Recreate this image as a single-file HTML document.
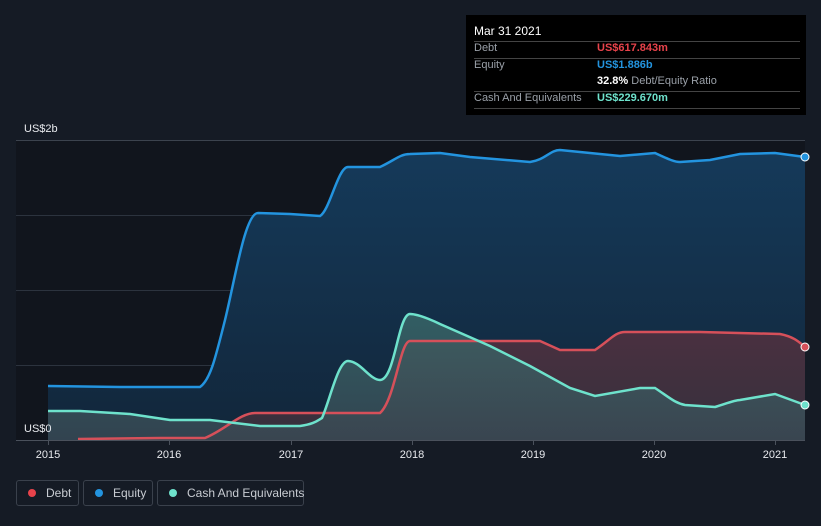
<!DOCTYPE html>
<html><head><style>
html,body{margin:0;width:821px;height:526px;overflow:hidden}
body{background:#151b25;font-family:"Liberation Sans",sans-serif;position:relative}
.tt{position:absolute;left:466px;top:15px;width:340px;height:100px;background:#000;color:#fff;font-size:11px}
.tt .r{position:absolute;left:8px;right:6px;border-top:1px solid #444}
.lab{color:#9aa0a8}
.leg{position:absolute;top:480px;height:26px;border:1px solid #3a414c;border-radius:3px;color:#c8ccd2;font-size:12px;line-height:24px;box-sizing:border-box;white-space:nowrap}
.dot{display:inline-block;width:8px;height:8px;border-radius:50%;margin:0 10px 0 11px;vertical-align:0px}
</style></head><body>
<svg width="821" height="526" style="position:absolute;left:0;top:0">
<defs>
<linearGradient id="ge" x1="0" y1="0" x2="0" y2="1"><stop offset="0" stop-color="#153a5a"/><stop offset="1" stop-color="#12263a"/></linearGradient>
<linearGradient id="gd" x1="0" y1="0" x2="0" y2="1"><stop offset="0" stop-color="#4a3040"/><stop offset="1" stop-color="#35303c"/></linearGradient>
<linearGradient id="gc" x1="0" y1="0" x2="0" y2="1"><stop offset="0" stop-color="#3a6a6a" stop-opacity=".8"/><stop offset="1" stop-color="#3a4a55" stop-opacity=".8"/></linearGradient>
</defs>
<rect x="16" y="140" width="789" height="300" fill="#11151d"/>
<g stroke="#2c333e" stroke-width="1"><line x1="16" y1="140.5" x2="805" y2="140.5" stroke="#3c434e"/><line x1="16" y1="215.5" x2="805" y2="215.5"/><line x1="16" y1="290.5" x2="805" y2="290.5"/><line x1="16" y1="365.5" x2="805" y2="365.5"/></g>
<path d="M48,386 L120,387 L200,387 C210,380 215,360 225,320 C235,280 245,213 258,213 L290,214 L320,216 C330,210 338,167 348,167 L380,167 C395,160 400,154 410,154 L440,153 L470,157 L530,162 C545,160 550,150 560,150 L620,156 L655,153 C670,160 675,162 680,162 L710,160 L740,154 L775,153 L805,157 L805,440 L48,440Z" fill="url(#ge)"/>
<path d="M78,439 L160,438 L205,438 C225,430 240,413 255,413 L380,413 C395,400 400,341 410,341 L540,341 L560,350 L595,350 C610,340 615,332 625,332 L700,332 L780,334 C795,337 800,343 805,347 L805,440 L78,440Z" fill="url(#gd)"/>
<path d="M48,411 L80,411 L130,414 L170,420 L210,420 L260,426 L300,426 C315,424 318,420 322,418 C330,400 338,361 348,361 C360,361 370,380 380,380 C395,380 398,314 410,314 C420,314 440,324 440,324 L490,346 L530,366 L570,388 L595,396 L640,388 L655,388 C670,398 675,403 685,405 L715,407 C725,404 735,400 740,400 L775,394 L805,405 L805,440 L48,440Z" fill="url(#gc)"/>
<path d="M48,386 L120,387 L200,387 C210,380 215,360 225,320 C235,280 245,213 258,213 L290,214 L320,216 C330,210 338,167 348,167 L380,167 C395,160 400,154 410,154 L440,153 L470,157 L530,162 C545,160 550,150 560,150 L620,156 L655,153 C670,160 675,162 680,162 L710,160 L740,154 L775,153 L805,157" fill="none" stroke="#2394df" stroke-width="2.5"/>
<path d="M78,439 L160,438 L205,438 C225,430 240,413 255,413 L380,413 C395,400 400,341 410,341 L540,341 L560,350 L595,350 C610,340 615,332 625,332 L700,332 L780,334 C795,337 800,343 805,347" fill="none" stroke="#d6505a" stroke-width="2.5"/>
<path d="M48,411 L80,411 L130,414 L170,420 L210,420 L260,426 L300,426 C315,424 318,420 322,418 C330,400 338,361 348,361 C360,361 370,380 380,380 C395,380 398,314 410,314 C420,314 440,324 440,324 L490,346 L530,366 L570,388 L595,396 L640,388 L655,388 C670,398 675,403 685,405 L715,407 C725,404 735,400 740,400 L775,394 L805,405" fill="none" stroke="#6ee2cc" stroke-width="2.5"/>
<circle cx="805" cy="157" r="4" fill="#2394df" stroke="#fff" stroke-width="1"/>
<circle cx="805" cy="347" r="4" fill="#d6505a" stroke="#fff" stroke-width="1"/>
<circle cx="805" cy="405" r="4" fill="#6ee2cc" stroke="#fff" stroke-width="1"/>
<line x1="16" y1="440.5" x2="805" y2="440.5" stroke="#4a515c"/>
<g stroke="#4a515c"><line x1="48.5" y1="440" x2="48.5" y2="445"/><line x1="169.5" y1="440" x2="169.5" y2="445"/><line x1="291.5" y1="440" x2="291.5" y2="445"/><line x1="412.5" y1="440" x2="412.5" y2="445"/><line x1="533.5" y1="440" x2="533.5" y2="445"/><line x1="654.5" y1="440" x2="654.5" y2="445"/><line x1="775.5" y1="440" x2="775.5" y2="445"/></g>
<g fill="#e8eaee" font-size="11" text-anchor="middle"><text x="48" y="458">2015</text><text x="169" y="458">2016</text><text x="291" y="458">2017</text><text x="412" y="458">2018</text><text x="533" y="458">2019</text><text x="654" y="458">2020</text><text x="775" y="458">2021</text></g>
<text x="24" y="132" fill="#e8eaee" font-size="11">US$2b</text>
<text x="24" y="432" fill="#e8eaee" font-size="11">US$0</text>
</svg>
<div class="tt">
<div style="position:absolute;left:8px;top:9px;font-size:12px">Mar 31 2021</div>
<div class="r" style="top:26px"></div>
<div class="lab" style="position:absolute;left:8px;top:27px">Debt</div><div style="position:absolute;left:131px;top:27px;color:#e8434b;font-weight:bold">US$617.843m</div>
<div class="r" style="top:43px"></div>
<div class="lab" style="position:absolute;left:8px;top:44px">Equity</div><div style="position:absolute;left:131px;top:44px;color:#2394df;font-weight:bold">US$1.886b</div>
<div style="position:absolute;left:131px;top:60px"><b>32.8%</b> <span class="lab">Debt/Equity Ratio</span></div>
<div class="r" style="top:76px"></div>
<div class="lab" style="position:absolute;left:8px;top:77px">Cash And Equivalents</div><div style="position:absolute;left:131px;top:77px;color:#6ee2cc;font-weight:bold">US$229.670m</div>
<div class="r" style="top:93px"></div>
</div>
<div class="leg" style="left:16px;width:63px"><span class="dot" style="background:#e8434b"></span>Debt</div>
<div class="leg" style="left:83px;width:70px"><span class="dot" style="background:#2394df"></span>Equity</div>
<div class="leg" style="left:157px;width:147px"><span class="dot" style="background:#6ee2cc"></span>Cash And Equivalents</div>
</body></html>
